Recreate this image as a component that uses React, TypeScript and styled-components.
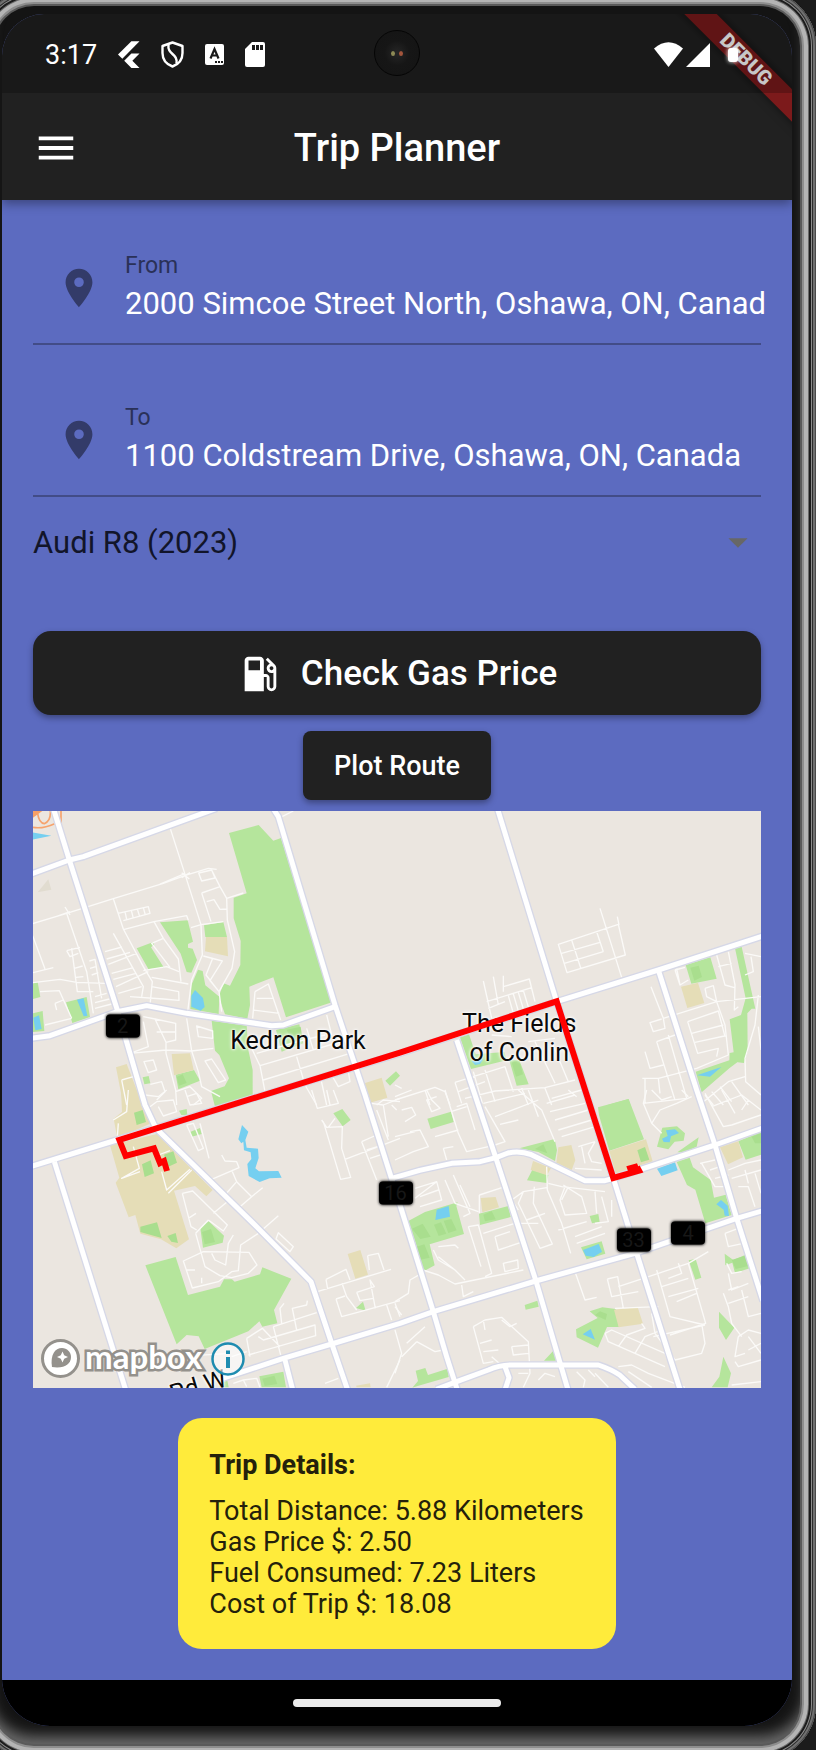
import React from 'react';
import styled, { createGlobalStyle } from 'styled-components';
import { MdArrowDropDown, MdLocalGasStation, MdLocationOn, MdMenu } from 'react-icons/md';

const GlobalStyle = createGlobalStyle`
  *, *::before, *::after { box-sizing: border-box; }
  body {
    margin: 0;
    background: #1b1b1b;
    font-family: Roboto, "Liberation Sans", sans-serif;
  }
  button, input, select { font: inherit; }
`;

const Stage = styled.div`
  overflow: hidden;
  min-height: 100vh;
  background: #1b1b1b;
`;

const Device = styled.div`
  margin: -10px 0 -10px -22px;
  padding: 24px 24px 34px;
  border-radius: 56px;
  background: #141414;
  box-shadow:
    inset 0 0 0 1px #4a4a4a,
    inset 0 0 0 3px #707070,
    inset 0 0 0 4px #2c2c2c,
    inset 0 0 0 5px #8c8c8c,
    inset 0 0 0 7px #1c1c1c,
    inset 0 0 0 8px #6a6a6a,
    inset 0 0 0 12px #b4b4b4,
    inset 0 0 0 14px #8e8e8e,
    inset 0 0 0 16px #5a5a5a,
    inset 0 -14px 14px 10px #6b6b6b;
`;

const Screen = styled.div`
  position: relative;
  overflow: hidden;
  border-radius: 42px 42px 48px 48px;
  background: #5c6bc0;
`;

const StatusBar = styled.div`
  position: relative;
  z-index: 2;
  display: flex;
  align-items: center;
  justify-content: space-between;
  height: 79px;
  padding: 2px 54px 0 43px;
  background: rgba(0, 0, 0, 0.22);
  color: #fff;
`;

const StatusGroup = styled.div<{ $gap: number }>`
  display: flex;
  align-items: center;
  gap: ${({ $gap }) => $gap}px;
`;

const Clock = styled.span`
  font-size: 27px;
  line-height: 32px;
`;

const Camera = styled.div`
  position: absolute;
  left: 50%;
  top: 16px;
  display: flex;
  align-items: center;
  justify-content: center;
  gap: 4px;
  width: 46px;
  height: 46px;
  margin-left: -23px;
  border: 1px solid #050505;
  border-radius: 50%;
  background: radial-gradient(circle, #262626 0, #161616 40%, #141414 100%);
`;

const Lens = styled.i<{ $color: string }>`
  width: 4px;
  height: 5px;
  border-radius: 50%;
  background: ${({ $color }) => $color};
`;

const BatterySlot = styled.span`
  display: flex;
  padding-left: 15px;
`;

const Battery = styled.i`
  width: 10px;
  height: 14px;
  border-radius: 3px;
  background: #fff;
  box-shadow: 0 0 4px #fff;
`;

const Ribbon = styled.div`
  position: absolute;
  z-index: 1;
  top: 34px;
  right: -54px;
  width: 200px;
  height: 23px;
  background: #7c1a1b;
  box-shadow: 0 0 10px rgba(0, 0, 0, 0.5);
  color: #fff;
  font-size: 20px;
  font-weight: 900;
  line-height: 23px;
  text-align: center;
  transform: rotate(45deg);
`;

const Top = styled.header`
  position: relative;
  background: #212121;
  box-shadow: 0 4px 10px rgba(0, 0, 0, 0.35);
`;

const AppBar = styled.div`
  display: grid;
  grid-template-columns: 46px 1fr 46px;
  align-items: center;
  height: 107px;
  padding: 2px 31px 0;
  color: #fff;
`;

const MenuButton = styled.button`
  display: flex;
  padding: 0;
  border: 0;
  background: none;
  color: inherit;
`;

const Title = styled.h1`
  margin: 0;
  font-size: 38px;
  font-weight: 500;
  line-height: 46px;
  text-align: center;
`;

const Content = styled.main`
  display: flex;
  flex-direction: column;
  align-items: stretch;
  padding: 31px;
`;

const Field = styled.div`
  display: grid;
  grid-template-columns: 92px 1fr;
  align-items: center;
  height: 114px;
  margin-bottom: 38px;
  padding-top: 2px;
  border-bottom: 2px solid #424c87;
`;

const FieldIcon = styled.span`
  display: flex;
  justify-content: center;
  color: #333b69;
`;

const FieldText = styled.div`
  display: flex;
  flex-direction: column;
  min-width: 0;
`;

const FieldLabel = styled.label`
  color: #2a3158;
  font-size: 23px;
  line-height: 32px;
`;

const FieldInput = styled.input`
  width: calc(100% + 6px);
  height: 44px;
  padding: 0;
  border: 0;
  outline: 0;
  background: none;
  color: #fff;
  font-size: 31px;
  line-height: 44px;
`;

const VehicleRow = styled.div`
  position: relative;
  display: flex;
  align-items: center;
  height: 90px;
  margin-top: -38px;
  margin-bottom: 44px;
`;

const VehicleSelect = styled.select`
  width: 100%;
  height: 60px;
  padding: 0;
  border: 0;
  appearance: none;
  background: none;
  color: #12152a;
  font-size: 31px;
`;

const SelectArrow = styled.span`
  position: absolute;
  right: 0;
  display: flex;
  color: #676767;
  pointer-events: none;
`;

const Button = styled.button<{ $large?: boolean }>`
  display: flex;
  align-items: center;
  justify-content: center;
  gap: 18px;
  align-self: ${({ $large }) => ($large ? 'stretch' : 'center')};
  height: ${({ $large }) => ($large ? 84 : 69)}px;
  margin-bottom: ${({ $large }) => ($large ? 16 : 11)}px;
  padding: 1px 31px 0;
  border: 0;
  border-radius: ${({ $large }) => ($large ? 18 : 8)}px;
  background: #212121;
  box-shadow: 0 3px 6px rgba(0, 0, 0, 0.35);
  color: #fff;
  font-size: ${({ $large }) => ($large ? 35 : 27)}px;
  font-weight: 500;
`;

const MapFrame = styled.section`
  position: relative;
  overflow: hidden;
  background: #ebe6e0;
`;

const MapDrawing = styled.svg`
  display: block;
  width: 100%;
  height: auto;
`;

const Pinned = styled.div<{ $x: number; $y: number; $turn?: number }>`
  position: absolute;
  left: ${({ $x }) => $x}%;
  top: ${({ $y }) => $y}%;
  transform: translate(-50%, -50%) rotate(${({ $turn = 0 }) => $turn}deg);
`;

const PlaceName = styled(Pinned)`
  color: #0a0a0a;
  font-size: 25px;
  line-height: 29px;
  text-align: center;
  white-space: nowrap;
  text-shadow: 0 0 2px #fff, 0 0 3px #fff, 0 0 4px #fff;
`;

const RouteShield = styled(Pinned)`
  width: 34px;
  height: 23px;
  border-radius: 4px;
  background: #000;
  box-shadow: 0 0 3px #000;
  color: #171717;
  font-size: 20px;
  line-height: 23px;
  text-align: center;
`;

const RouteLayer = styled(MapDrawing)`
  position: absolute;
  inset: 0;
`;

const Attribution = styled.div`
  position: absolute;
  left: 8px;
  bottom: 8px;
  display: flex;
  align-items: center;
  gap: 5px;
`;

const Wordmark = styled.span`
  padding: 0 4px 5px 0;
  color: #fff;
  font-family: Lato, "Liberation Sans", sans-serif;
  font-size: 33px;
  font-weight: 700;
  line-height: 38px;
  -webkit-text-stroke: 5px #94918c;
  paint-order: stroke fill;
`;

const InfoLink = styled.a`
  display: flex;
`;

const TripCard = styled.section`
  align-self: center;
  margin-top: 30px;
  padding: 32px 32px 29px 31px;
  border-radius: 24px;
  background: #ffeb3b;
  color: #24210b;
  font-size: 27px;
  line-height: 31px;
`;

const TripTitle = styled.h2`
  margin: 0 0 15px;
  font-size: 27px;
  font-weight: 700;
  line-height: 31px;
`;

const TripLine = styled.p`
  margin: 0;
`;

const NavBar = styled.div`
  display: flex;
  align-items: center;
  justify-content: center;
  height: 46px;
  background: #000;
`;

const HomePill = styled.i`
  width: 208px;
  height: 8px;
  border-radius: 4px;
  background: #ebebeb;
`;

/* Four sheets of the map, each in its own local coordinates. */
const NW = 'translate(-9 -18)';
const NE = 'translate(1086 -18)';
const SW = 'translate(-9 837)';
const SE = 'translate(1086 837)';

const parks: [string, string[]][] = [
  [NW, [
    'M597 84L686 60L730 107L753 99L906 592L768 637L730 517L658 545L660 600L652 641L585 628L566 575L581 535L600 542L631 480L632 408L611 340V278L650 265Z',
    'M390 352L473 346L489 410L474 417V428L488 431L501 465L484 503L470 501L452 446Z',
    'M320 430L370 411L372 419L363 427L402 488L355 492Z',
    'M522 361L580 351L591 396H526Z',
    'M504 494L518 498L526 541L568 575L566 627L481 612L484 541Z',
    'M108 592L170 576L180 636L127 654Z',
    'M8 535L23 531L31 576L8 582Z',
    'M8 625L38 618L43 678L8 681Z',
    'M545 647L650 662L655 735L668 795V875L555 905L543 858L584 844L597 820L568 750L555 737Z',
    'M437 809L492 795L510 827L445 853Z',
    'M338 817L356 813L361 835L343 838Z',
    'M738 675L808 658L820 715L755 740Z',
    'M1066 827L1098 799L1110 812L1080 842Z',
  ]],
  [NE, [
    'M872 480L946 457L965 521L889 536Z',
    'M1020 430L1040 425L1081 611H1070L1057 625L1058 738L1047 774L1029 770L1003 790L920 862L902 800L1003 766L1004 744L1016 742L1004 643L1038 630L1052 580Z',
    'M1034 740L1058 737L1047 774L1028 772Z',
    'M195 697L222 688L242 748L328 741L335 766L228 792Z',
    'M343 766L373 766L401 838L365 842Z',
    'M638 900L700 882L706 900Z',
  ]],
  [SW, [
    'M346 526L437 501L474 615L570 590L582 568H606L614 575L690 553L697 532L784 566L732 660L742 700L697 710L688 694L655 724L524 777L506 739L470 735L440 763Z',
    'M511 415L536 394L582 437L578 458L519 473Z',
    'M312 68L338 60L348 96L320 105Z',
    'M458 266L485 238L508 261L498 270L478 259Z',
    'M507 277L518 270L525 284L512 286Z',
    'M480 126L510 114L515 132L485 140Z',
    'M910 70L937 57L962 90L938 109Z',
    'M978 654L999 635L1007 662Z',
    'M688 859L760 845L768 892H695Z',
    'M568 878L592 872L596 892H568Z',
    'M447 62L470 57L472 75H454Z',
  ]],
  [SE, [
    'M609 52L701 27L747 148L643 182L612 76Z',
    'M97 86L168 65L176 96L107 117Z',
    'M373 175L479 147L486 180L480 213L430 186Z',
    'M412 239L460 255L455 279L396 271Z',
    'M40 393L90 366L188 337L184 348L207 432L104 463L119 526L84 545L62 460Z',
    'M252 371L340 348L347 381L255 405Z',
    'M584 378L610 372L614 395L591 400Z',
    'M558 472L620 454L631 491L575 508Z',
    'M802 113L846 109L870 130L866 152L839 155L820 178L786 170Z',
    'M847 187L911 142L905 170L868 187Z',
    'M845 216L884 203L894 232L947 270L957 323L992 314L1010 375L931 400L901 299L876 285Z',
    'M1030 154L1098 126V194L1052 209Z',
    'M881 511L902 507L919 563L901 569Z',
    'M989 491L1015 510L1050 495L1064 535L1020 549L1012 518L991 526Z',
    'M389 645L427 632L431 650L392 659Z',
    'M584 664L622 652L662 657L672 711H636L609 773L545 742L543 718L608 684Z',
    'M972 665L1018 713L993 750L972 713Z',
    'M985 800L1008 850L998 892H950L973 860Z',
    'M62 842L91 834L99 855L158 836L161 861L68 888L52 893L69 873Z',
    'M447 812L475 782L485 812Z',
  ]],
];

const groves: [string, string[]][] = [
  [NW, ['M440 816L458 808L470 834L447 842Z', 'M770 674L812 665L818 705L790 715Z']],
  [NE, ['M886 488L911 482L921 516L898 527Z', 'M350 772L373 768L384 808L363 815Z']],
  [SW, [
    'M516 426L543 417L555 456L524 463Z', 'M697 866L733 857L742 882L704 888Z', 'M312 68L338 60L348 96L320 105Z',
    'M336 223L362 211L372 250L344 261Z', 'M402 194L430 184L441 218L415 230Z', 'M331 410L381 397L395 444L331 426Z',
    'M412 438L437 429L444 459L424 455Z',
  ]],
  [SE, [
    'M51 416L83 401L107 440L76 447Z', 'M117 404L138 397L154 431L131 438Z', 'M146 392L169 387L185 421L160 429Z',
    'M65 470L88 463L104 503L76 509Z', 'M727 181L750 171L763 209L738 217Z', 'M1010 510L1050 497L1060 528L1022 537Z',
    'M265 374L290 363L302 388L270 394Z', 'M600 675L615 664L636 672L632 690Z', 'M420 177L445 163L457 190Z',
    'M1070 140L1098 130V160H1080Z',
  ]],
];

const sands: [string, string[]][] = [
  [NW, ['M528 396H591L594 454L525 439Z', 'M425 747L480 745L491 795L432 811Z', 'M258 787L290 777L338 900H280Z', 'M1003 835L1055 818L1072 878L1020 893Z']],
  [NE, ['M858 545L909 533L928 594L877 609Z']],
  [SW, [
    'M273 0H325L363 100L262 145L251 86L276 66Z',
    'M240 166L380 132L548 300L529 319L495 288L432 302L477 448L439 475L393 448L331 431L316 375L296 382L257 278L268 263Z',
    'M1010 0H1060L1070 22L1020 36Z', 'M953 492L991 480L1014 554L976 566Z', 'M978 887L1020 880L1022 892H980Z',
  ]],
  [SE, [
    'M643 183L753 148L773 214L662 250Z', 'M490 172L529 165L541 211L530 240L484 218Z', 'M414 213L468 234L456 256L407 240Z',
    'M257 324L302 321L312 352L262 367Z', 'M975 172L1030 154L1044 202L999 223Z', 'M657 659L728 652L744 701L671 712Z',
  ]],
];

const waters: [string, string[]][] = [
  [NW, ['M8 82L64 92L8 104Z', 'M484 572L495 555L519 579L524 606L512 617L484 605Z', 'M141 584L161 580L172 633L161 634Z', 'M10 638L27 631L35 672L16 676Z']],
  [NE, ['M906 811L979 786L945 815Z', 'M230 768L265 763L255 777L240 780Z']],
  [SW, ['M636 105L655 125L646 150L650 173L684 176L686 204L676 235L687 244L745 243L755 263L719 265L689 276L656 258L652 222L664 207L662 187L642 181L640 155L634 160L625 148Z']],
  [SE, [
    'M801 146L818 138L813 121L840 118L852 129L828 139L824 157L806 156Z', 'M786 236L840 217L848 241L799 258Z',
    'M964 343L978 330L998 347L1002 378L989 377L986 359Z', 'M564 480L611 462L621 485L596 501L572 497Z',
    'M125 359L161 348L165 380L121 390Z', 'M563 733L587 717L600 749Z',
  ]],
];

const streets: [string, string[]][] = [
  [NW, [
    'M8 356L110 325L250 281L400 235L466 211L535 190L560 193', 'M420 68L466 211L513 359L517 450L485 525L473 620', 'M390 237L466 205M455 203L478 222M455 218L480 203',
    'M78 335L120 320M105 306L120 330', 'M506 204L545 195L555 219L515 228Z', 'M545 195L570 245L590 280L640 264M515 264L570 245M515 264L543 350M530 290L552 284L570 313L590 312M590 280L592 345L614 440L606 490L567 560L575 620M513 359L580 350M483 368L513 359',
    'M250 281L280 372L340 485L367 530L360 600', 'M264 325L355 305L360 325L280 347M285 320L290 343M304 316L310 340M322 312L329 335M340 308L346 330', 'M280 374L372 350L470 332L475 346', 'M372 350L400 400L445 462L453 530', 'M400 400L365 415L420 487M340 497L410 485L447 500',
    'M250 385L340 545L335 575M225 440L276 426M230 462L300 442M235 478L320 445M245 505L310 488M250 523L318 505M258 545L355 500M265 565L335 545M300 575L400 582L447 586L446 560L365 545M365 517L475 537',
    'M8 392L45 492M8 503L70 488M8 533L90 523L140 532L225 535L245 540M110 325L170 500L190 625M110 437L150 427M110 437L120 455L145 445M125 430L142 560L190 560M133 490L158 483M138 517L160 515M178 468L195 463L215 580M180 490L200 484M185 510L205 503M195 575L230 565M195 593L238 582M195 610L245 597',
    'M30 560L88 557L125 640M75 595L100 585M75 595L80 615M45 660L125 640',
    'M675 560L715 537L752 645M680 580L732 580M670 615L748 625M675 560L668 640', 'M520 453L577 468L540 527L567 560M548 460L528 510L567 560',
    'M340 635L375 642L408 712L437 705L437 655L375 642M380 681L437 681M340 650L355 725L300 745M408 712V745L437 855L440 900M300 745L408 735L485 738L550 730M470 640L485 738L505 800L515 845L570 875M500 663L548 678V700L505 695Z',
    'M342 770L370 765L380 795L355 803ZM525 768L545 762L587 825L565 833ZM361 838L395 830L405 860L380 885M437 860L480 845L515 880L490 900',
    'M680 745L820 705L885 690M690 782L950 705M700 825L960 745M665 730L690 782L705 860M830 670L850 735M890 630L905 690M800 755L825 840L860 900M870 810L890 900M905 810L955 800L960 830L925 845L905 810',
    'M275 825L310 815M275 825L290 900M1040 900L1060 885L1110 890', 'M750 38L790 18',
  ]],
  [NE, [
    'M490 418L670 358L691 450L516 503Z', 'M530 405L558 492M605 380L625 440M500 445L615 412M508 475L625 440M615 310L680 517M667 335L672 360',
    'M275 590L410 548M265 528L290 640M295 515L310 600M325 512V560M325 545L403 522L420 590M340 572L355 625M355 567L370 618M370 562L385 612M385 556L400 606M280 610L330 590M290 690L350 695',
    'M768 545L805 640L810 670L775 680L765 653L800 642M805 640L965 590L1098 575M820 690L875 880L745 895M785 710L840 690M785 710L840 885M750 740L765 790L805 780M742 820L790 820L905 790M790 820L795 865M750 820V895',
    'M840 495L870 487M840 495L855 540L880 525M855 540L845 490M878 650L970 618L990 695M878 650L908 745L970 730L965 755M890 685L985 660M900 712L988 693M930 550L955 542L965 590L990 660L1000 750L905 790M930 550L935 575L965 590M965 450L990 540L1018 548M970 485L1010 475M1000 440L1020 540L1018 615L1030 605M1050 445L1098 455M1068 455L1075 500L1050 510M1090 570L1080 660L1050 760L1052 830L1098 870M1090 665L1098 735',
    'M180 832L330 785L355 860M180 832L200 895M190 860L270 830M235 800L262 895M270 795L300 890M0 885L120 847L150 860L165 900M210 880L300 858L450 848L540 825M380 850L400 900M450 850L470 900M420 710L480 835M470 710L520 830M400 710L480 700M470 880L560 855M90 855L105 900M0 840L20 850',
    'M930 870L955 900M950 860L985 900M975 845L1010 890M1010 830L1060 900M920 895L1000 830L1050 815',
  ]],
  [SW, [
    'M250 90L290 65L295 0M265 100L262 140M310 170L328 235L275 265L330 245M385 195L420 182M395 245L410 300L480 238M415 310L485 240M470 105L505 182L520 175L490 100L470 105M510 100L537 205',
    'M345 15L385 20L410 0M360 50L380 35L430 30L440 65L400 78L385 50M465 0L480 45L515 40L500 10L470 20',
    'M575 195L585 213L620 215L627 233L545 268M605 240L620 275L665 320L698 293M585 315L618 277M665 320L630 350M550 370L590 337M457 310L488 303L592 405L580 423L535 390M457 310L483 410L500 420M475 385L498 370M497 430L535 390M497 430L525 530L570 557L605 563L655 550L681 525L657 487L520 485L460 513L487 594L565 575L605 545L625 542L632 465L685 430M545 490L555 510L587 525L595 460L610 435M470 540L495 540M515 580V563M685 430L745 377',
    'M745 428L790 470L780 485L738 447Z', 'M650 745L697 715L750 770M650 745L660 800M685 740L700 750L855 705L857 737L655 795M730 710L860 668M730 710L752 795M755 700L750 655L762 640M800 720L787 655L830 645L832 632M605 800L650 785M440 800L600 790',
    'M862 605L1083 538M888 568L948 538L960 570M888 568L893 597M918 627L935 680L980 668L1110 632M918 627L945 618M936 580L950 620L980 660M980 607L1033 590L1020 570L1036 655M980 607L990 632L1030 625M1013 497L1045 490L1062 540M1013 497L1018 540M1070 645L1085 690M1095 640L1110 680M1110 810L1070 892',
    'M880 95L932 268L962 262L935 175L937 110L890 112L875 90M845 0L862 55L925 40L910 0M890 0L900 45M915 85L895 112M945 208L1110 145M995 155L1040 135M995 155L1040 270M1010 180L1050 168M1020 205L1065 190M1025 40L1060 45L1110 25M1060 45L1075 140M1040 60L1075 150M1085 45L1100 60M885 880L925 865M610 880L640 870L650 890M640 870L680 865L690 892',
  ]],
  [SE, [
    'M0 20L50 0M20 60L50 52L62 75L30 95M95 0L110 30L135 55L110 65L95 30L125 20M45 125L75 120L100 170L55 185L0 210M0 140L60 125M150 0L190 130L215 185L280 170M168 65L215 50M120 140L190 120M145 175L175 170M145 175L155 210M185 50L215 40L240 120M270 50L330 155L300 165M265 40L390 10M300 80L430 30M315 103L370 90M370 0L440 60L480 155M400 0L430 80M455 40L540 15M465 65L570 40M480 90L580 60M490 120L590 90M500 140L600 110M520 0L545 20',
    'M550 170L600 155M600 155L580 190L590 215L620 220M560 170L570 220M540 235L620 240M455 230L457 300L500 400L527 490M460 280L500 290L630 305M505 285L560 320L575 370L510 375L495 330L510 290M600 305L605 370M620 320L640 395L600 400M650 330V380M520 290L500 330M370 360L350 330L385 305L455 293M385 305L370 340L435 475L472 462L415 340L418 290M395 390L450 370M365 400L430 400M490 420L575 395M540 440L620 410M545 460L630 430',
    'M60 325L125 275L140 330L75 350M60 295L125 275M75 320L130 300M175 255L225 370L205 380M150 270L180 340L250 365M195 285L225 350M253 315V370M253 315L330 290M220 410L250 405L290 550L270 560M220 410L258 530M265 430L360 400M300 440L310 480L385 455M300 440L345 425M325 520L368 510L370 535L330 545ZM84 540L130 555L180 582L385 540M130 470L180 465L190 475M130 500L180 540L210 570M115 480L130 510L180 540M200 585L205 620L235 605M0 635L40 610L45 570L80 550M0 650L20 675M0 720L20 790L0 850M35 760L90 710M65 755L120 785L145 780M20 800L65 755',
    'M235 710L270 690L320 682L400 755L405 850L385 892M235 710L265 820L295 815M265 690L270 720M255 760L290 750M265 785L310 780M320 690L345 710L365 700M350 770L400 765M350 770L355 795L400 790M290 800L325 830',
    'M540 545L570 630L605 622M637 567L668 560L685 655M637 567L650 620L730 605M670 590L790 550L880 520L940 485M785 540L825 680L930 705M850 520L860 550L820 565M880 520L932 700L825 735M800 590L880 565M820 620L910 595M845 635L905 610M660 655L790 650M630 730L650 720L810 790L830 835M630 730L640 755L810 830M670 770L695 735L750 715L740 700M720 790L750 740L800 720M770 670L780 730L840 810L920 790L930 760L920 700M775 740L930 705M670 830L710 825L760 850L870 892M700 845L770 892',
    'M755 0L745 40L770 100L800 130M770 100L795 60L845 40L890 20M770 0L800 30L830 20M860 0L880 20M930 10L985 110L1010 105L1098 75M950 50L1040 15L1098 60M980 0L1020 70M1040 60L1060 30M915 220L960 210M920 220L960 290L1000 290M945 240L975 230M960 265L1000 255M1000 240L1050 220L1098 210M1010 265L1098 240M1030 290L1060 290L1080 350M1050 240L1060 280M1080 250L1098 310',
    'M990 430L1030 415M990 430L1000 470L1045 460M985 610L1000 650L1010 700L1040 740M1000 640L1060 620M1000 600L1030 590M1000 550L1010 600L1060 580M1040 600L1060 680L1098 670M1030 740L1060 720L1098 730M1030 740L1020 800L1050 790M1060 740L1098 790M1060 780L1098 760M1020 815L1030 830L1098 810M1010 885L1098 875M995 520L1010 550L1040 545',
    'M370 850H400M430 870L450 850L480 860M545 845L570 870L565 892M580 840L600 860M600 850L640 892',
  ]],
];

const roads = [
  'M62 -5L109 147L253 597L336 882L369 952L671 1247L834 1412L896 1597L945 1740',
  'M-5 189L109 147L151 137L551 -8',
  'M722 -5L736 17L906 582L996 852L1101 1182L1201 1502L1241 1637L1274 1740',
  'M-5 682L51 674L253 602L341 584L461 607L716 644L751 642L906 587',
  'M-5 1066L251 987L1101 727L1571 572L1876 477L2190 375',
  'M1394 -5L1571 572L1671 882L1741 1102L1811 1327L1941 1735',
  'M1271 687L1336 882L1389 1042L1508 1407L1606 1740',
  'M1876 477L1991 837L2046 1002L2111 1222L2190 1470',
  'M1076 1102L1160 1078L1256 1057L1341 1052L1389 1040L1425 1026Q1460 1018 1495 1031L1656 1109H1716L1741 1102L2046 1002L2190 951',
  'M560 1705L751 1642L896 1599L1101 1537L1201 1502L1508 1410L1806 1327L2111 1222L2190 1199',
  'M64 1052L279 1740',
  'M756 1647L780 1740',
  'M1210 1735L1271 1712L1366 1677Q1400 1662 1436 1662H1696Q1735 1675 1760 1692L1806 1735',
  'M1416 1667L1428 1700L1415 1740',
];

const trip =
  'M402 1080L393 1050L381 1056L363 1012L278 1035L259 987L1101 725L1571 571L1741 1101L1818 1079L1812 1068';

const Shapes = ({ layers, fill }: { layers: [string, string[]][]; fill: string }) => (
  <g fill={fill}>
    {layers.map(([shift, paths]) => (
      <path key={shift} transform={shift} d={paths.join('')} />
    ))}
  </g>
);

const places = [
  { name: ['Kedron Park'], x: 36.4, y: 39.7 },
  { name: ['The Fields', 'of Conlin'], x: 66.8, y: 39.3 },
];

const shields = [
  { label: '2', x: 12.3, y: 37.3 },
  { label: '16', x: 49.8, y: 66.2 },
  { label: '33', x: 82.5, y: 74.4 },
  { label: '4', x: 90, y: 73.2 },
];

const RouteMap = () => (
  <MapFrame aria-label="Route map">
    <MapDrawing viewBox="0 0 2184 1731" aria-hidden="true">
      <Shapes layers={parks} fill="#b5e59c" />
      <Shapes layers={sands} fill="#e5ddb7" />
      <Shapes layers={groves} fill="#a9de8e" />
      <Shapes layers={waters} fill="#75cff0" />
      <path d="M14 244L46 205L55 236Z" fill="#e1dcd0" />
      <g fill="none" stroke="#fbfaf8" strokeWidth="4" strokeLinejoin="round">
        {streets.map(([shift, paths]) => (
          <path key={shift} transform={shift} d={paths.join('')} />
        ))}
      </g>
      <path d="M0 0H28L0 20Z" fill="#f7a066" />
      <path d="M0 49Q30 54 65 38M14 8Q18 36 34 38Q54 30 52 0M84 0V48" fill="none" stroke="#f6a36d" strokeWidth="5" />
      <g fill="none" stroke="#d6d8e7" strokeWidth="23" strokeLinejoin="round">
        {roads.map((d) => <path key={d} d={d} />)}
      </g>
      <g fill="none" stroke="#fff" strokeWidth="15" strokeLinejoin="round">
        {roads.map((d) => <path key={d} d={d} />)}
      </g>
    </MapDrawing>
    {places.map(({ name, x, y }) => (
      <PlaceName key={name[0]} $x={x} $y={y}>
        {name.map((line) => <div key={line}>{line}</div>)}
      </PlaceName>
    ))}
    <PlaceName $x={22.7} $y={99.6} $turn={-17}>Rd W</PlaceName>
    {shields.map(({ label, x, y }) => (
      <RouteShield key={label} $x={x} $y={y}>{label}</RouteShield>
    ))}
    <RouteLayer viewBox="0 0 2184 1731" aria-hidden="true">
      <path d={trip} fill="none" stroke="#f00" strokeWidth="18" />
      <path d="M1780 1066L1812 1057L1822 1082L1789 1092Z" fill="#f00" />
    </RouteLayer>
    <Attribution>
      <svg width="39" height="39" viewBox="0 0 39 39" aria-hidden="true">
        <circle cx="19.5" cy="19.5" r="18" fill="#fff" stroke="#94918c" strokeWidth="3" />
        <path d="M11 28C9 16 14 9 21 9C26 9 30 13 30 18C30 25 23 30 11 28Z" fill="#94918c" />
        <path d="M21.500 12.500L23.200 16.300L27 18L23.200 19.700L21.500 23.500L19.800 19.700L16 18L19.800 16.300Z" fill="#fff" />
      </svg>
      <Wordmark>mapbox</Wordmark>
      <InfoLink href="#attribution" aria-label="Map attribution">
        <svg width="34" height="34" viewBox="0 0 34 34" aria-hidden="true">
          <circle cx="17" cy="17" r="15.500" fill="#fff" fillOpacity=".6" stroke="#1e8cb0" strokeWidth="2.500" />
          <path d="M15 8.500H19V12H15ZM15 15H19V26H15Z" fill="#1e8cb0" />
        </svg>
      </InfoLink>
    </Attribution>
  </MapFrame>
);

const FlutterIcon = () => (
  <svg width="22" height="28" viewBox="0 0 23 29" fill="#fff" aria-hidden="true">
    <path d="M14 0H22.500L4.500 18.500L0 14Z" />
    <path d="M14 13H22.500L15 20.500L22.500 28H14L6.500 20.500Z" />
  </svg>
);

const ShieldIcon = () => (
  <svg width="23" height="27" viewBox="0 0 23 27" fill="none" stroke="#fff" strokeWidth="2.400" strokeLinejoin="round" aria-hidden="true">
    <path d="M11.500 1.500L21.500 5V12C21.500 19 17 23.500 11.500 25.500C6 23.500 1.500 19 1.500 12V5Z" />
    <path d="M7.500 3.500C6 14 17 12 15.500 22.500" />
  </svg>
);

const LetterIcon = () => (
  <svg width="19" height="21" viewBox="0 0 19 21" aria-hidden="true">
    <rect width="19" height="21" rx="2" fill="#fff" />
    <path d="M5.500 14.500L9.500 5L13.500 14.500M7 11.500H12" fill="none" stroke="#1a1a1a" strokeWidth="2.200" />
    <path d="M10 17H12V19H10ZM13 17H15V19H13ZM16 17H18V19H16Z" fill="#1a1a1a" />
  </svg>
);

const SdIcon = () => (
  <svg width="20" height="25" viewBox="0 0 20 25" aria-hidden="true">
    <path d="M7 0H18Q20 0 20 2V23Q20 25 18 25H2Q0 25 0 23V7Z" fill="#fff" />
    <path d="M7 3H10V8H7ZM11 3H14V8H11ZM15 3H18V8H15Z" fill="#1a1a1a" />
  </svg>
);

const WifiIcon = () => (
  <svg width="29" height="25" viewBox="0 0 29 25" fill="#fff" aria-hidden="true">
    <path d="M14.500 25L0 6.500Q14.500 -6 29 6.500Z" />
  </svg>
);

const SignalIcon = () => (
  <svg width="24" height="24" viewBox="0 0 24 24" fill="#fff" aria-hidden="true">
    <path d="M24 0V24H0Z" />
  </svg>
);

const AddressField = ({ id, label, value }: { id: string; label: string; value: string }) => (
  <Field>
    <FieldIcon><MdLocationOn size={46} /></FieldIcon>
    <FieldText>
      <FieldLabel htmlFor={id}>{label}</FieldLabel>
      <FieldInput id={id} type="text" defaultValue={value} />
    </FieldText>
  </Field>
);

const details = [
  'Total Distance: 5.88 Kilometers',
  'Gas Price $: 2.50',
  'Fuel Consumed: 7.23 Liters',
  'Cost of Trip $: 18.08',
];

export default function App() {
  return (
    <Stage>
      <GlobalStyle />
      <Device>
        <Screen>
          <Top>
            <StatusBar>
              <StatusGroup $gap={21}>
                <Clock>3:17</Clock>
                <FlutterIcon />
                <ShieldIcon />
                <LetterIcon />
                <SdIcon />
              </StatusGroup>
              <Camera>
                <Lens $color="#8d8a55" />
                <Lens $color="#a3553c" />
              </Camera>
              <StatusGroup $gap={3}>
                <WifiIcon />
                <SignalIcon />
                <BatterySlot><Battery /></BatterySlot>
              </StatusGroup>
            </StatusBar>
            <Ribbon>DEBUG</Ribbon>
            <AppBar>
              <MenuButton type="button" aria-label="Open menu"><MdMenu size={46} /></MenuButton>
              <Title>Trip Planner</Title>
            </AppBar>
          </Top>
          <Content>
            <AddressField id="from" label="From" value="2000 Simcoe Street North, Oshawa, ON, Canada" />
            <AddressField id="to" label="To" value="1100 Coldstream Drive, Oshawa, ON, Canada" />
            <VehicleRow>
              <VehicleSelect aria-label="Vehicle" defaultValue="r8">
                <option value="r8">Audi R8 (2023)</option>
              </VehicleSelect>
              <SelectArrow><MdArrowDropDown size={46} /></SelectArrow>
            </VehicleRow>
            <Button type="button" $large>
              <MdLocalGasStation size={46} />
              Check Gas Price
            </Button>
            <Button type="button">Plot Route</Button>
            <RouteMap />
            <TripCard>
              <TripTitle>Trip Details:</TripTitle>
              {details.map((line) => <TripLine key={line}>{line}</TripLine>)}
            </TripCard>
          </Content>
          <NavBar><HomePill /></NavBar>
        </Screen>
      </Device>
    </Stage>
  );
}
